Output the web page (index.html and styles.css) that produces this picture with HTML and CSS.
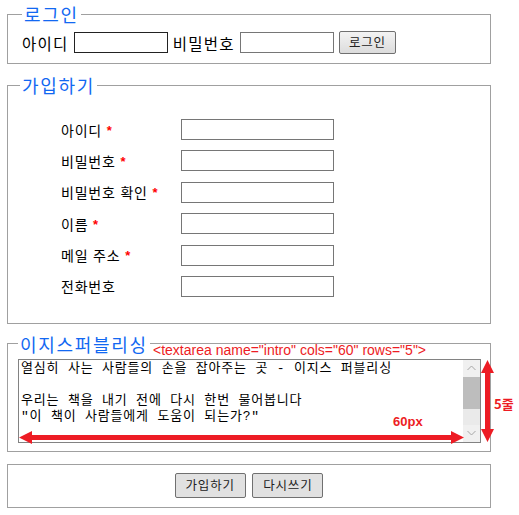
FILE: index.html
```html
<!DOCTYPE html>
<html lang="ko">
<head>
  <meta charset="UTF-8">
  <title>회원가입</title>
  <link rel="stylesheet" href="styles.css">
</head>
<body>
  <div class="page">
    <!-- 로그인 -->
    <fieldset class="box login">
      <legend>로그인</legend>
      <div class="login-row">
        <label for="loginId">아이디</label>
        <input type="text" id="loginId" class="field short focused">
        <label for="loginPw">비밀번호</label>
        <input type="password" id="loginPw" class="field short">
        <button type="button" class="btn">로그인</button>
      </div>
    </fieldset>

    <!-- 가입하기 -->
    <fieldset class="box signup">
      <legend>가입하기</legend>
      <div class="signup-grid">
        <label for="uid">아이디 <span class="req">*</span></label>
        <input type="text" id="uid" class="field">
        <label for="upw">비밀번호 <span class="req">*</span></label>
        <input type="password" id="upw" class="field">
        <label for="upw2">비밀번호 확인 <span class="req">*</span></label>
        <input type="password" id="upw2" class="field">
        <label for="uname">이름 <span class="req">*</span></label>
        <input type="text" id="uname" class="field">
        <label for="umail">메일 주소 <span class="req">*</span></label>
        <input type="text" id="umail" class="field">
        <label for="utel">전화번호</label>
        <input type="text" id="utel" class="field">
      </div>
    </fieldset>

    <!-- 이지스퍼블리싱 -->
    <fieldset class="box intro">
      <legend>이지스퍼블리싱</legend>
      <div class="intro-wrap">
        <textarea name="intro" cols="60" rows="5" class="intro-text">열심히 사는 사람들의 손을 잡아주는 곳 - 이지스 퍼블리싱

우리는 책을 내기 전에 다시 한번 물어봅니다
"이 책이 사람들에게 도움이 되는가?"
</textarea>

        <div class="scrollbar">
          <div class="sb-btn">
            <svg width="9" height="6" viewBox="0 0 9 6"><polyline points="0.5,5 4.5,1 8.5,5" fill="none" stroke="#a6a6a6" stroke-width="1"/></svg>
          </div>
          <div class="sb-track"><div class="sb-thumb"></div></div>
          <div class="sb-btn">
            <svg width="9" height="6" viewBox="0 0 9 6"><polyline points="0.5,1 4.5,5 8.5,1" fill="none" stroke="#a6a6a6" stroke-width="1"/></svg>
          </div>
        </div>

        <!-- 설명 표시 -->
        <span class="note note-tag">&lt;textarea name="intro" cols="60" rows="5"&gt;</span>
        <svg class="arrow-h" width="445" height="13" viewBox="0 0 445 13">
          <polygon points="0,6.5 13,0 13,4 432,4 432,0 445,6.5 432,13 432,9 13,9 13,13" fill="#ed1c24"/>
        </svg>
        <span class="note note-w">60px</span>
        <svg class="arrow-v" width="13" height="82" viewBox="0 0 13 82">
          <polygon points="6.5,0 13,13 9,13 9,69 13,69 6.5,82 0,69 4,69 4,13 0,13" fill="#ed1c24"/>
        </svg>
        <span class="note note-h">5줄</span>
      </div>
    </fieldset>

    <!-- 버튼 -->
    <fieldset class="box actions">
      <button type="submit" class="btn btn-lg">가입하기</button>
      <button type="reset" class="btn btn-lg">다시쓰기</button>
    </fieldset>
  </div>
</body>
</html>
```

FILE: styles.css
```css
/* Global Styles */
body {
  margin: 0;
  font-family: "Noto Sans CJK KR", "Liberation Sans", sans-serif;
  color: #000;
  background-color: #fff;
}

.page {
  padding: 4px 0 0 7px;
}

/* Fieldset boxes */
.box {
  width: 484px;
  box-sizing: border-box;
  margin: 0 0 11px 0;
  border: 1px solid #a0a0a0;
  min-inline-size: 0;
}

.box legend {
  padding: 0 2px;
  font-size: 18px;
  line-height: 20px;
  letter-spacing: 1.7px;
  color: #1268f2;
}

.field {
  box-sizing: border-box;
  height: 21px;
  margin: 0;
  padding: 0 2px;
  border: 1px solid #767676;
  font-size: 13px;
  background-color: #fff;
}

.field.focused {
  border-color: #222;
}

.btn {
  box-sizing: border-box;
  height: 23px;
  margin: 0;
  padding: 0 9px;
  border: 1px solid #707070;
  border-radius: 2px;
  background: linear-gradient(#f3f3f3, #dcdcdc);
  font-family: "Noto Sans CJK KR", sans-serif;
  font-size: 12.5px;
  letter-spacing: 0.8px;
  line-height: 1;
  color: #222;
}

.btn-lg {
  height: 25px;
  padding: 0 10px;
  background: #e1e1e1;
}

/* Login */
.login {
  padding: 7px 14px 9px;
}

.login-row {
  display: flex;
  align-items: center;
  gap: 5px;
  height: 23px;
  font-size: 15.5px;
  letter-spacing: 1.3px;
}

.field.short {
  width: 94px;
}

/* Signup */
.signup {
  padding: 24px 12px 26px;
}

.signup-grid {
  display: grid;
  grid-template-columns: 120px 153px;
  row-gap: 10.4px;
  align-items: center;
  margin-left: 41px;
  font-size: 14px;
  letter-spacing: 0.8px;
}

.signup-grid .field {
  width: 153px;
}

.req {
  color: #f00;
  font-family: "Liberation Sans", sans-serif;
  font-weight: bold;
  font-size: 13px;
  vertical-align: 1px;
}

/* Intro */
.intro {
  padding: 5px 9px 8px 10px;
  margin-top: -1px;
  margin-bottom: 12px;
}

.intro-wrap {
  position: relative;
  width: 463px;
  height: 84px;
}

.intro-text {
  display: block;
  box-sizing: border-box;
  width: 463px;
  height: 84px;
  margin: 0;
  padding: 1px 19px 1px 2px;
  border: 1px solid #828282;
  font-family: "Liberation Mono", "Noto Sans CJK KR", monospace;
  font-size: 13px;
  line-height: 16px;
  letter-spacing: 0.8px;
  resize: none;
  overflow: hidden;
  color: #000;
}

.scrollbar {
  position: absolute;
  top: 1px;
  right: 1px;
  bottom: 1px;
  width: 17px;
  display: flex;
  flex-direction: column;
  background-color: #eaeaea;
}

.sb-btn {
  height: 17px;
  display: flex;
  align-items: center;
  justify-content: center;
  background-color: #f0f0f0;
}

.sb-track {
  flex: 1;
}

.sb-thumb {
  height: 32px;
  background-color: #bdbdbd;
}

/* Annotations */
.note {
  position: absolute;
  color: #ed1c24;
  font-family: "Liberation Sans", sans-serif;
  white-space: nowrap;
}

.note-tag {
  left: 135px;
  bottom: 100%;
  margin-bottom: 1px;
  font-size: 14px;
  line-height: 15px;
}

.note-w {
  left: 375px;
  top: 55px;
  font-size: 13px;
  font-weight: bold;
  line-height: 16px;
}

.note-h {
  left: 476px;
  top: 36px;
  font-family: "Noto Sans CJK KR", sans-serif;
  font-size: 13px;
  font-weight: bold;
  line-height: 18px;
}

.arrow-h {
  position: absolute;
  left: 1px;
  top: 72px;
}

.arrow-v {
  position: absolute;
  left: 463px;
  top: 1px;
}

/* Actions */
.actions {
  padding: 6px 0 9px;
  text-align: center;
  margin-bottom: 0;
}

.actions .btn + .btn {
  margin-left: 2px;
}
```
